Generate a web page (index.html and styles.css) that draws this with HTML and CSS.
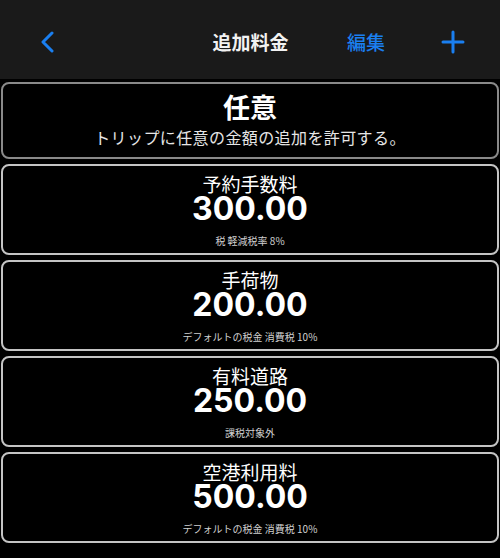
FILE: index.html
```html
<!DOCTYPE html>
<html lang="ja">
<head>
    <meta charset="UTF-8">
    <meta name="viewport" content="width=device-width, initial-scale=1.0">
    <title>追加料金</title>
    <link rel="stylesheet" href="styles.css">
</head>
<body>
    <header class="nav">
        <div class="nav-left">
            <svg class="back" width="14" height="22" viewBox="0 0 14 22">
                <path d="M12 2 L3 11 L12 20" fill="none" stroke="#1a7ff0" stroke-width="3" stroke-linecap="round" stroke-linejoin="round"/>
            </svg>
        </div>
        <div class="nav-title">追加料金</div>
        <div class="nav-right">
            <span class="edit">編集</span>
            <svg class="add" width="24" height="24" viewBox="0 0 24 24">
                <path d="M12 2 V22 M2 12 H22" fill="none" stroke="#1a7ff0" stroke-width="3" stroke-linecap="round"/>
            </svg>
        </div>
    </header>

    <main class="list">
        <div class="card card-any">
            <div class="any-title">任意</div>
            <div class="any-text">トリップに任意の金額の追加を許可する。</div>
        </div>
        <div class="card">
            <div class="name">予約手数料</div>
            <div class="amount">300.00</div>
            <div class="tax">税 軽減税率 8%</div>
        </div>
        <div class="card">
            <div class="name">手荷物</div>
            <div class="amount">200.00</div>
            <div class="tax">デフォルトの税金 消費税 10%</div>
        </div>
        <div class="card">
            <div class="name">有料道路</div>
            <div class="amount">250.00</div>
            <div class="tax">課税対象外</div>
        </div>
        <div class="card">
            <div class="name">空港利用料</div>
            <div class="amount">500.00</div>
            <div class="tax">デフォルトの税金 消費税 10%</div>
        </div>
    </main>
</body>
</html>
```

FILE: styles.css
```css
* {
    box-sizing: border-box;
}

body {
    margin: 0;
    background-color: #000;
    color: #fff;
    font-family: "Noto Sans CJK JP", "Noto Sans", sans-serif;
}

.nav {
    display: grid;
    grid-template-columns: 1fr auto 1fr;
    align-items: center;
    height: 79px;
    padding: 4px 35px 0 40px;
    background-color: #1a1a1a;
}

.nav-left {
    display: flex;
    align-items: center;
}

.nav-title {
    font-size: 19px;
    font-weight: 700;
    color: #f2f2f2;
    margin-left: -4px;
}

.nav-right {
    display: flex;
    align-items: center;
    justify-content: flex-end;
    gap: 56px;
}

.edit {
    font-size: 19px;
    font-weight: 500;
    color: #1a7ff0;
}

.add {
    margin-top: 1px;
}

.list {
    display: flex;
    flex-direction: column;
    gap: 5px;
    padding: 3px 1px 0 1px;
}

.card {
    display: flex;
    flex-direction: column;
    align-items: center;
    height: 91px;
    border: 2px solid #c4c4c4;
    border-radius: 8px;
    background-color: #000;
    padding-top: 7px;
}

.card-any {
    height: 77px;
    border-color: #8a8a8a;
    padding-top: 4px;
}

.any-title {
    font-size: 27px;
    font-weight: 700;
    line-height: 38px;
}

.any-text {
    font-size: 16px;
    line-height: 22px;
    letter-spacing: 0.4px;
    color: #e6e6e6;
}

.name {
    font-size: 19px;
    font-weight: 400;
    line-height: 22px;
}

.amount {
    font-family: Inter, "Noto Sans", sans-serif;
    font-size: 32px;
    font-weight: 700;
    line-height: 28px;
}

.tax {
    font-size: 10px;
    line-height: 14px;
    margin-top: 11px;
    color: #d0d0d0;
}
```
